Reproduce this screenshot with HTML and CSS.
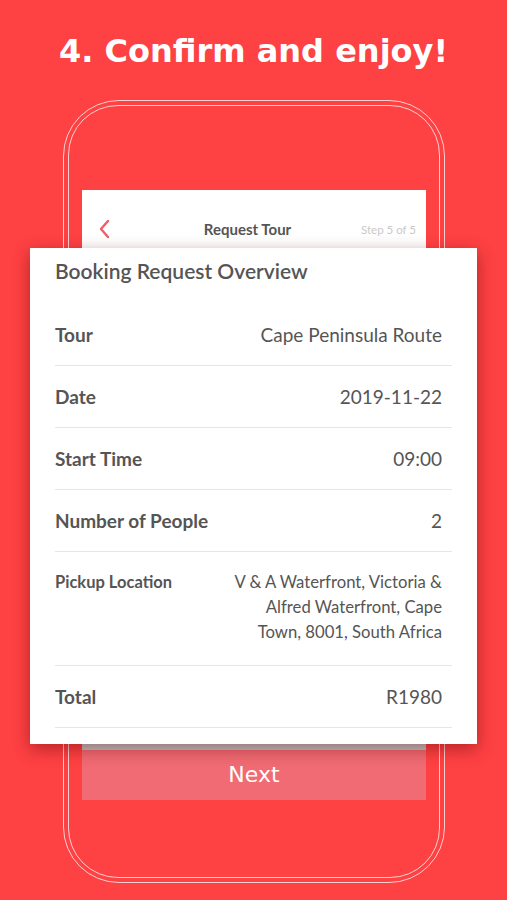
FILE: index.html
```html
<!DOCTYPE html>
<html lang="en">
<head>
    <meta charset="UTF-8">
    <meta name="viewport" content="width=device-width, initial-scale=1.0">
    <title>Confirm and enjoy</title>
    <link rel="stylesheet" href="styles.css">
</head>
<body>

    <h1 class="headline">4. Confirm and enjoy!</h1>

    <div class="phone-outer">
      <div class="phone-inner">

        <div class="screen-header">
          <svg class="back-icon" width="12" height="20" viewBox="0 0 12 20">
            <path d="M10 2 L3 10 L10 18" fill="none" stroke="#ee5e68" stroke-width="2.4" stroke-linecap="round" stroke-linejoin="round"/>
          </svg>
          <span class="screen-title">Request Tour</span>
          <span class="step-count">Step 5 of 5</span>
        </div>

        <div class="overview-card">
          <h2 class="card-title">Booking Request Overview</h2>

          <div class="overview-row">
            <span class="row-label">Tour</span>
            <span class="row-value">Cape Peninsula Route</span>
          </div>
          <div class="overview-row">
            <span class="row-label">Date</span>
            <span class="row-value">2019-11-22</span>
          </div>
          <div class="overview-row">
            <span class="row-label">Start Time</span>
            <span class="row-value">09:00</span>
          </div>
          <div class="overview-row">
            <span class="row-label">Number of People</span>
            <span class="row-value">2</span>
          </div>
          <div class="overview-row pickup-row">
            <span class="row-label small-label">Pickup Location</span>
            <span class="row-value address">V &amp; A Waterfront, Victoria &amp;<br>Alfred Waterfront, Cape<br>Town, 8001, South Africa</span>
          </div>
          <div class="overview-row">
            <span class="row-label">Total</span>
            <span class="row-value">R1980</span>
          </div>
        </div>

        <div class="card-underside"></div>
        <div class="next-button">Next</div>

      </div>
    </div>

</body>
</html>
```

FILE: styles.css
```css
body {
  margin: 0;
  background-color: #fe4143;
  font-family: "Lato", "Open Sans", sans-serif;
  width: 507px;
  height: 900px;
  overflow: hidden;
}

.headline {
  margin: 0;
  padding-top: 31px;
  height: 100px;
  box-sizing: border-box;
  text-align: center;
  color: #fff;
  font-family: "DejaVu Sans", sans-serif;
  font-weight: bold;
  font-size: 32px;
  line-height: 40px;
}

/* phone outline: two thin white lines */
.phone-outer {
  margin-left: 63px;
  width: 382px;
  height: 783px;
  box-sizing: border-box;
  border: 1.5px solid rgba(255, 255, 255, 0.75);
  border-radius: 56px;
  padding: 4px;
}

.phone-inner {
  height: 100%;
  box-sizing: border-box;
  border: 1.5px solid rgba(255, 255, 255, 0.75);
  border-radius: 50px;
  padding: 84px 13px 0 13px;
}

.screen-header {
  height: 58px;
  background-color: #fff;
  display: flex;
  align-items: center;
  padding: 20px 10px 0 16px;
  box-sizing: border-box;
}

.back-icon {
  display: block;
}

.screen-title {
  flex: 1;
  text-align: center;
  font-weight: bold;
  font-size: 15px;
  color: #555;
  padding-left: 24px;
}

.step-count {
  font-size: 11.5px;
  color: #c9c9c9;
}

.overview-card {
  margin: 0 -51px 0 -52px;
  background-color: #fff;
  padding: 0 25px 16px 25px;
  box-shadow: 0 5px 16px rgba(90, 0, 0, 0.45);
  position: relative;
}

.card-title {
  margin: 0;
  height: 56px;
  line-height: 45px;
  font-size: 21px;
  font-weight: 600;
  color: #555;
}

.overview-row {
  display: flex;
  justify-content: space-between;
  align-items: flex-start;
  padding: 18px 10px 18px 0;
  line-height: 25px;
  border-bottom: 1.5px solid #e6e6e6;
  color: #555;
}

.pickup-row {
  padding-bottom: 20px;
}

.row-label {
  font-weight: bold;
  font-size: 19px;
}

.small-label {
  font-size: 16.5px;
}

.row-value {
  font-size: 19px;
  text-align: right;
}

.address {
  font-size: 16.7px;
}

.card-underside {
  height: 6px;
  background-color: #c3c6c7;
}

.next-button {
  height: 50px;
  background-color: #f06b73;
  color: #fff;
  text-align: center;
  line-height: 50px;
  font-family: "DejaVu Sans", sans-serif;
  font-size: 22px;
}
```
